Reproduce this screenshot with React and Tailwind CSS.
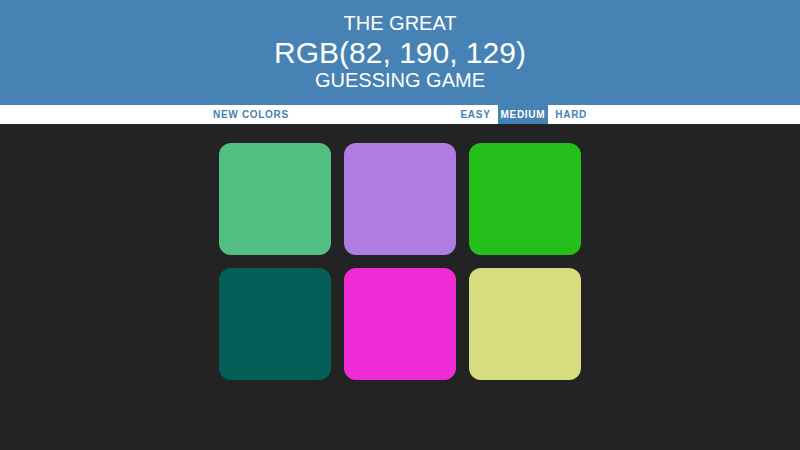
import React, { useState } from 'react';

const colors = [
    'rgb(82, 190, 129)',
    'rgb(176, 124, 226)',
    'rgb(37, 191, 27)',
    'rgb(3, 95, 88)',
    'rgb(240, 43, 214)',
    'rgb(215, 220, 126)',
];

function App() {
    const [mode, setMode] = useState('MEDIUM');

    return (
        <div className="min-h-screen bg-[#232323] font-['Liberation_Sans',Arial,sans-serif]">
            {/* Title */}
            <header className="h-[105px] bg-[#4682b4] text-white text-center pt-[12px]">
                <div className="text-[20px] leading-[22px]">THE GREAT</div>
                <div className="text-[30px] leading-[32px] mt-[3px]">RGB(82, 190, 129)</div>
                <div className="text-[20px] leading-[22px]">GUESSING GAME</div>
            </header>

            {/* Controls */}
            <div className="h-[19px] bg-white">
                <div className="w-[400px] mx-auto h-full flex items-stretch text-[10px] tracking-[0.7px] font-bold text-[#4682b4]">
                    <button className="px-[13px] leading-[19px]">NEW COLORS</button>
                    <div className="ml-auto mr-[10px] flex gap-[4px]">
                        {['EASY', 'MEDIUM', 'HARD'].map((m) => (
                            <button
                                key={m}
                                onClick={() => setMode(m)}
                                className={
                                    'px-[3px] leading-[19px] ' +
                                    (mode === m ? 'bg-[#4682b4] text-white' : '')
                                }
                            >
                                {m}
                            </button>
                        ))}
                    </div>
                </div>
            </div>

            {/* Squares */}
            <div className="mt-[19px] mx-auto w-[362px] grid grid-cols-3 gap-[13px]">
                {colors.map((c) => (
                    <div key={c} className="w-[112px] h-[112px] rounded-[12px]" style={{ backgroundColor: c }} />
                ))}
            </div>
        </div>
    );
}

export default App;
